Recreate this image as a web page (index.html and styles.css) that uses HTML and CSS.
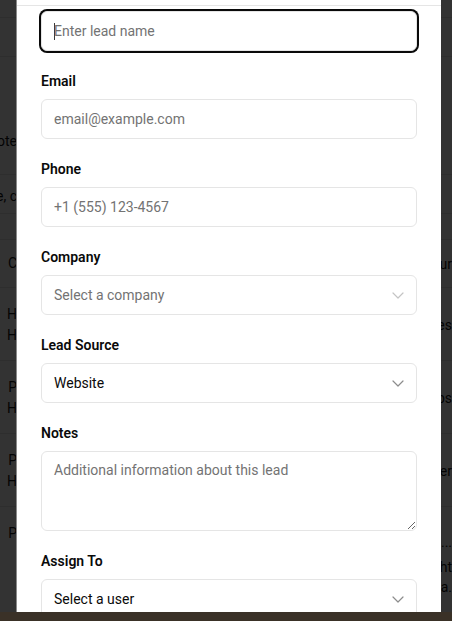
FILE: index.html
```html
<!DOCTYPE html>
<html lang="en">
<head>
<meta charset="utf-8">
<title>New Lead</title>
<link rel="stylesheet" href="styles.css">
</head>
<body>
  <div class="page">
    <div class="bg-row bg-top"></div>
    <div class="bg-row bg-head"></div>
    <div class="bg-row bg-intro">
      <div class="bg-left"><span>Quote</span></div>
      <div class="bg-right"><span></span></div>
    </div>
    <div class="bg-row bg-search">
      <div class="bg-left"><span>name, c</span></div>
      <div class="bg-right"><span></span></div>
    </div>
    <div class="bg-row bg-gap"></div>
    <div class="bg-row bg-thead">
      <div class="bg-left"><span>C</span></div>
      <div class="bg-right"><span>Sour</span></div>
    </div>
    <div class="bg-row bg-item">
      <div class="bg-left"><span>H</span><span>H</span></div>
      <div class="bg-right"><span>Ves</span></div>
    </div>
    <div class="bg-row bg-item">
      <div class="bg-left"><span>P</span><span>H</span></div>
      <div class="bg-right"><span>Jobs</span></div>
    </div>
    <div class="bg-row bg-item">
      <div class="bg-left"><span>P</span><span>H</span></div>
      <div class="bg-right"><span>Ther</span></div>
    </div>
    <div class="bg-row bg-item bg-last">
      <div class="bg-left"><span>P</span></div>
      <div class="bg-right bg-right-multi"><span>···</span><span>Light</span><span>na.</span></div>
    </div>
  </div>

  <div class="backdrop"></div>

  <div class="dialog">
    <div class="dialog-head"></div>
    <form class="form">
      <div class="field">
        <input class="control control-focus" type="text" placeholder="Enter lead name">
      </div>
      <div class="field">
        <label class="label">Email</label>
        <input class="control" type="email" placeholder="email@example.com">
      </div>
      <div class="field">
        <label class="label">Phone</label>
        <input class="control" type="tel" placeholder="+1 (555) 123-4567">
      </div>
      <div class="field">
        <label class="label">Company</label>
        <button type="button" class="control select">
          <span class="select-value placeholder">Select a company</span>
          <svg class="chevron chevron-light" viewBox="0 0 16 16" width="16" height="16"><path d="M3 6l5 5 5-5" fill="none" stroke="currentColor" stroke-width="1.2" stroke-linecap="round" stroke-linejoin="round"/></svg>
        </button>
      </div>
      <div class="field">
        <label class="label">Lead Source</label>
        <button type="button" class="control select">
          <span class="select-value">Website</span>
          <svg class="chevron" viewBox="0 0 16 16" width="16" height="16"><path d="M3 6l5 5 5-5" fill="none" stroke="currentColor" stroke-width="1.2" stroke-linecap="round" stroke-linejoin="round"/></svg>
        </button>
      </div>
      <div class="field">
        <label class="label">Notes</label>
        <textarea class="control textarea" placeholder="Additional information about this lead"></textarea>
      </div>
      <div class="field">
        <label class="label">Assign To</label>
        <button type="button" class="control select">
          <span class="select-value">Select a user</span>
          <svg class="chevron" viewBox="0 0 16 16" width="16" height="16"><path d="M3 6l5 5 5-5" fill="none" stroke="currentColor" stroke-width="1.2" stroke-linecap="round" stroke-linejoin="round"/></svg>
        </button>
      </div>
    </form>
  </div>

  <div class="taskbar"></div>
</body>
</html>
```

FILE: styles.css
```css
* { box-sizing: border-box; }

html, body {
  margin: 0;
  padding: 0;
  height: 100%;
  overflow: hidden;
}

body {
  font-family: "Segoe UI", Roboto, "Noto Sans", sans-serif;
  font-size: 14px;
  color: #0a0a0a;
  background: #ffffff;
}

/* background page (seen through overlay) */
.page {
  display: flex;
  flex-direction: column;
  width: 100%;
}

.bg-row {
  display: flex;
  justify-content: space-between;
  border-bottom: 1px solid #e6e6e6;
  color: #111;
}

.bg-top { height: 18px; }
.bg-head { height: 39px; }
.bg-intro { height: 118px; align-items: flex-end; padding-bottom: 22px; }
.bg-search { height: 39px; align-items: center; padding-top: 5px; }
.bg-gap { height: 26px; }
.bg-thead { height: 48px; align-items: center; }
.bg-item { height: 73px; align-items: center; padding-top: 2px; }
.bg-last { height: 104px; border-bottom: none; align-items: flex-start; padding-top: 16px; }

.bg-left {
  width: 17px;
  overflow: hidden;
  display: flex;
  flex-direction: column;
  align-items: flex-end;
  line-height: 21px;
}

.bg-left span, .bg-right span { white-space: nowrap; }

.bg-right {
  width: 11px;
  overflow: hidden;
  display: flex;
  flex-direction: column;
  align-items: flex-end;
  line-height: 20px;
}

.bg-right-multi { padding-top: 14px; }

.backdrop {
  position: fixed;
  inset: 0;
  background: rgba(0, 0, 0, 0.8);
}

/* dialog */
.dialog {
  position: fixed;
  left: 16px;
  top: 0;
  width: 425px;
  height: 621px;
  background: #ffffff;
  border-left: 1px solid #8a8a8a;
  overflow: hidden;
}

.dialog-head {
  height: 6px;
  border-bottom: 1px solid #e5e5e5;
}

.form {
  display: flex;
  flex-direction: column;
  gap: 20px;
  padding: 5px 24px 0 24px;
}

.field {
  display: flex;
  flex-direction: column;
  gap: 8px;
}

.label {
  font-size: 14px;
  font-weight: 600;
  line-height: 20px;
  color: #0a0a0a;
}

.control {
  display: flex;
  align-items: center;
  width: 100%;
  height: 40px;
  padding: 8px 12px;
  border: 1px solid #e5e5e5;
  border-radius: 6px;
  background: #ffffff;
  font-family: inherit;
  font-size: 14px;
  line-height: 20px;
  color: #0a0a0a;
  outline: none;
  margin: 0;
}

.control::placeholder { color: #737373; }

.control-focus {
  box-shadow: 0 0 0 2px #0a0a0a;
  background-image: linear-gradient(#3a3a3a, #3a3a3a);
  background-repeat: no-repeat;
  background-position: 12px center;
  background-size: 1px 17px;
}

.select {
  justify-content: space-between;
  text-align: left;
  cursor: pointer;
}

.select-value { color: #0a0a0a; }
.select-value.placeholder { color: #737373; }

.chevron {
  flex: none;
  color: #8c8c8c;
  margin-right: -2px;
}

.chevron-light { color: #c4c4c4; }

.textarea {
  display: block;
  height: 80px;
  resize: vertical;
}

.taskbar {
  position: fixed;
  left: 0;
  right: 0;
  bottom: 0;
  height: 9px;
  background: #3a3127;
}
```
